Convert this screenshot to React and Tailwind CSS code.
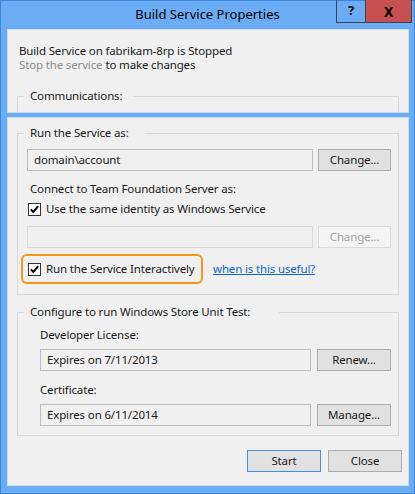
import React from "react";

const CheckBox = () => (
  <span className="w-[13px] h-[13px] shrink-0 border border-[#333333] bg-white flex items-center justify-center">
    <svg width="11" height="11" viewBox="0 0 11 11">
      <path d="M1.8 5.4 L4.3 8 L9.2 2.2" fill="none" stroke="#000" strokeWidth="2" />
    </svg>
  </span>
);

const Field = ({ value, width, disabled }) => (
  <div
    className={`h-[22px] flex items-center pl-[6px] border bg-[#f0f0f0] ${width} ${
      disabled ? "border-[#d9d9d9]" : "border-[#bcbcbc]"
    }`}
  >
    {value}
  </div>
);

const Button = ({ label, width, disabled, isDefault }) => (
  <button
    type="button"
    className={`h-[22px] flex items-center justify-center border ${width} ${
      disabled
        ? "bg-[#f4f4f4] border-[#dadada] text-[#a3a3a3]"
        : isDefault
        ? "bg-[#e1e1e1] border-[#3c8fe2]"
        : "bg-[#e1e1e1] border-[#adadad]"
    }`}
  >
    {label}
  </button>
);

const GroupBox = ({ title, legendWidth, className, bodyClass, children }) => (
  <fieldset className={`border border-[#d9d9d9] ${className}`}>
    <legend className={`ml-[6px] pl-[6px] h-[16px] leading-[16px] ${legendWidth}`}>{title}</legend>
    <div className={bodyClass}>{children}</div>
  </fieldset>
);

export default function App() {
  return (
    <div className="w-[415px] h-[494px] bg-[#6badf5] border border-[#3d85d8] flex flex-col text-[11.5px] tracking-[-0.15px] text-[#1a1a1a] font-['Segoe_UI','Noto_Sans',sans-serif]">
      {/* title bar */}
      <div className="relative h-[28px] flex items-center justify-center">
        <span className="text-[13px] tracking-normal text-black -mt-[1px]">Build Service Properties</span>
        <div className="absolute top-[-1px] right-[2px] flex">
          <div className="w-[29px] h-[23px] border border-t-0 border-r-0 border-[#3a4552] flex items-center justify-center font-bold text-[13px] text-black">
            ?
          </div>
          <div className="w-[47px] h-[23px] bg-[#c75050] border border-t-0 border-[#3a4552] flex items-center justify-center font-bold text-[14px] text-black">
            X
          </div>
        </div>
      </div>

      <div className="flex-1 flex flex-col gap-[4px] pl-[6px] pr-[5px] pb-[7px]">
        {/* status panel */}
        <div className="h-[84px] shrink-0 bg-[#f0f0f0] border border-[#cfdbe8] overflow-hidden flex flex-col">
          <div className="pt-[14px] pl-[11px] leading-[14px]">
            <div className="h-[14px]">Build Service on fabrikam-8rp is Stopped</div>
            <div className="h-[14px] flex gap-[3px]">
              <div className="text-[#8c8c8c]">Stop the service</div>
              <div>to make changes</div>
            </div>
          </div>
          <GroupBox title="Communications:" legendWidth="w-[109px]" className="mt-[16px] mx-[9px] h-[40px] border-b-0" />
        </div>

        {/* main panel */}
        <div className="flex-1 bg-[#f0f0f0] border border-[#cfdbe8] flex flex-col pt-[7px] px-[9px]">
          <GroupBox title="Run the Service as:" legendWidth="w-[121px]" bodyClass="pl-[9px] pb-[10px]">
            <div className="mt-[8px] flex gap-[5px]">
              <Field value="domain\account" width="w-[286px]" />
              <Button label="Change..." width="w-[73px]" />
            </div>
            <div className="mt-[10px] ml-[3px] leading-[16px]">Connect to Team Foundation Server as:</div>
            <div className="mt-[4px] ml-[1px] h-[16px] flex items-center gap-[5px]">
              <CheckBox />
              <span>Use the same identity as Windows Service</span>
            </div>
            <div className="mt-[9px] flex gap-[5px]">
              <Field value="" width="w-[286px]" disabled />
              <Button label="Change..." width="w-[73px]" disabled />
            </div>
            <div className="mt-[6px] -ml-[6px] flex items-center">
              <div className="w-[182px] h-[30px] rounded-[6px] border-2 border-[#f7941d] flex items-center gap-[5px] pl-[5px] whitespace-nowrap">
                <CheckBox />
                <span>Run the Service Interactively</span>
              </div>
              <a href="#" className="ml-[10px] text-[#0b66cc] underline">
                when is this useful?
              </a>
            </div>
          </GroupBox>

          <GroupBox
            title="Configure to run Windows Store Unit Test:"
            legendWidth="w-[255px]"
            className="mt-[9px]"
            bodyClass="pl-[22px] pb-[9px]"
          >
            <div className="mt-[7px] leading-[16px]">Developer License:</div>
            <div className="mt-[6px] flex gap-[6px]">
              <Field value="Expires on 7/11/2013" width="w-[271px]" />
              <Button label="Renew..." width="w-[74px]" />
            </div>
            <div className="mt-[11px] leading-[16px]">Certificate:</div>
            <div className="mt-[6px] flex gap-[6px]">
              <Field value="Expires on 6/11/2014" width="w-[271px]" />
              <Button label="Manage..." width="w-[74px]" />
            </div>
          </GroupBox>

          <div className="mt-[14px] flex justify-end gap-[7px] -mr-[3px]">
            <Button label="Start" width="w-[74px]" isDefault />
            <Button label="Close" width="w-[74px]" />
          </div>
        </div>
      </div>
    </div>
  );
}
